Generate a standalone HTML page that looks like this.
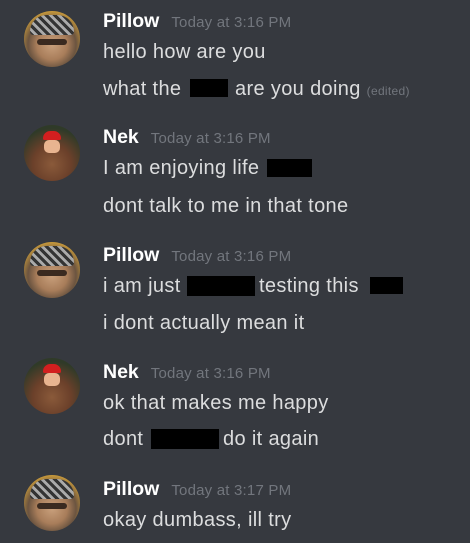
<!DOCTYPE html>
<html><head><meta charset="utf-8"><style>
body{margin:0;width:470px;height:543px;background:#36393f;overflow:hidden;position:relative;font-family:"Liberation Sans",sans-serif;}
.l{position:absolute;left:103px;height:24px;line-height:24px;white-space:nowrap;color:#dcddde;font-size:20px;letter-spacing:0.35px}
.n{font-weight:bold;color:#fff;font-size:19.5px;letter-spacing:0}
.t{font-weight:normal;color:#72767d;font-size:15px;margin-left:12px;letter-spacing:0.2px}
.e{font-size:12px;color:#72767d;letter-spacing:0.3px}
.b{position:absolute;background:#000}
.av{position:absolute;left:24px;width:56px;height:56px;border-radius:50%;overflow:hidden}
.p{background:radial-gradient(circle at 50% 60%,#c9a07c 0,#a87d5a 35%,#6b5440 55%,#d7a53a 80%);}
.p:before{content:"";position:absolute;left:6px;top:4px;width:44px;height:20px;border-radius:20px 20px 4px 4px;background:repeating-linear-gradient(45deg,#333 0 3px,#aaa 3px 6px);}
.p:after{content:"";position:absolute;left:13px;top:28px;width:30px;height:6px;background:#3a2a20;border-radius:3px}
.m{background:radial-gradient(circle at 50% 70%,#8a5a3a 0,#6b402a 40%,#2f3a28 75%);}
.m:before{content:"";position:absolute;left:19px;top:6px;width:18px;height:9px;border-radius:9px 9px 2px 2px;background:#d21f1f}
.m:after{content:"";position:absolute;left:20px;top:15px;width:16px;height:13px;border-radius:5px;background:#e8b490}
</style></head><body>
<div class="av p" style="top:11px"></div>
<div class="av m" style="top:125px"></div>
<div class="av p" style="top:242px"></div>
<div class="av m" style="top:358px"></div>
<div class="av p" style="top:475px"></div>

<div class="l n" style="top:9px">Pillow<span class="t">Today at 3:16 PM</span></div>
<div class="l" style="top:40px">hello how are you</div>
<div class="l" style="top:77px">what the</div>
<div class="b" style="left:190px;top:79px;width:38px;height:18px"></div>
<div class="l" style="top:77px;left:235px">are you doing <span class="e">(edited)</span></div>

<div class="l n" style="top:125px">Nek<span class="t">Today at 3:16 PM</span></div>
<div class="l" style="top:156px">I am enjoying life</div>
<div class="b" style="left:267px;top:159px;width:45px;height:18px"></div>
<div class="l" style="top:194px">dont talk to me in that tone</div>

<div class="l n" style="top:243px">Pillow<span class="t">Today at 3:16 PM</span></div>
<div class="l" style="top:274px">i am just</div>
<div class="b" style="left:187px;top:276px;width:68px;height:20px"></div>
<div class="l" style="top:274px;left:259px">testing this</div>
<div class="b" style="left:370px;top:277px;width:33px;height:17px"></div>
<div class="l" style="top:311px">i dont actually mean it</div>

<div class="l n" style="top:360px">Nek<span class="t">Today at 3:16 PM</span></div>
<div class="l" style="top:391px">ok that makes me happy</div>
<div class="l" style="top:427px">dont</div>
<div class="b" style="left:151px;top:429px;width:68px;height:20px"></div>
<div class="l" style="top:427px;left:223px">do it again</div>

<div class="l n" style="top:477px">Pillow<span class="t">Today at 3:17 PM</span></div>
<div class="l" style="top:508px">okay dumbass, ill try</div>
</body></html>
